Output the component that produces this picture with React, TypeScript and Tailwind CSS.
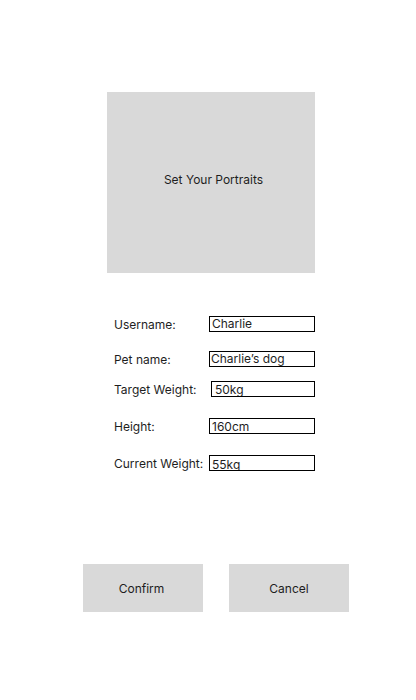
const fields = [
  { label: "Username:", value: "Charlie", mt: "mt-[43px]", box: "ml-[95px] w-[106px]", pad: "pl-[2px] pt-0" },
  { label: "Pet name:", value: "Charlie’s dog", mt: "mt-[19px]", box: "ml-[95px] w-[106px]", pad: "pl-[1px] pt-0" },
  { label: "Target Weight:", value: "50kg", mt: "mt-[14px]", box: "ml-[97px] w-[104px]", pad: "pl-[3px] pt-[1px]" },
  { label: "Height:", value: "160cm", mt: "mt-[21px]", box: "ml-[95px] w-[106px]", pad: "pl-[2px] pt-[1px]" },
  { label: "Current Weight:", value: "55kg", mt: "mt-[21px]", box: "ml-[95px] w-[106px]", pad: "pl-[2px] pt-[2px]" },
];

export default function App() {
  return (
    <div
      className="w-[416px] h-[700px] bg-white text-[#1e1e1e] text-[12px] pt-[92px]"
      style={{ fontFamily: "Inter, 'Noto Sans', sans-serif" }}
    >
      {/* portrait placeholder */}
      <div className="ml-[107px] w-[208px] h-[181px] bg-[#d9d9d9] flex items-center justify-center pb-[6px] pl-[5px]">
        Set Your Portraits
      </div>

      {/* profile fields */}
      <div className="flex flex-col">
        {fields.map((f) => (
          <div key={f.label} className={`flex items-center h-[16px] ${f.mt}`}>
            <span className="ml-[114px] w-0 whitespace-nowrap leading-[16px] pt-[1px]">{f.label}</span>
            <div
              className={`h-[16px] border border-black leading-[13px] whitespace-nowrap overflow-hidden ${f.box} ${f.pad}`}
            >
              {f.value}
            </div>
          </div>
        ))}
      </div>

      {/* actions */}
      <div className="flex mt-[93px] ml-[83px] gap-[26px]">
        <button className="w-[120px] h-[48px] bg-[#d9d9d9] pt-[2px] pr-[3px]">Confirm</button>
        <button className="w-[120px] h-[48px] bg-[#d9d9d9] pt-[2px]">Cancel</button>
      </div>
    </div>
  );
}
